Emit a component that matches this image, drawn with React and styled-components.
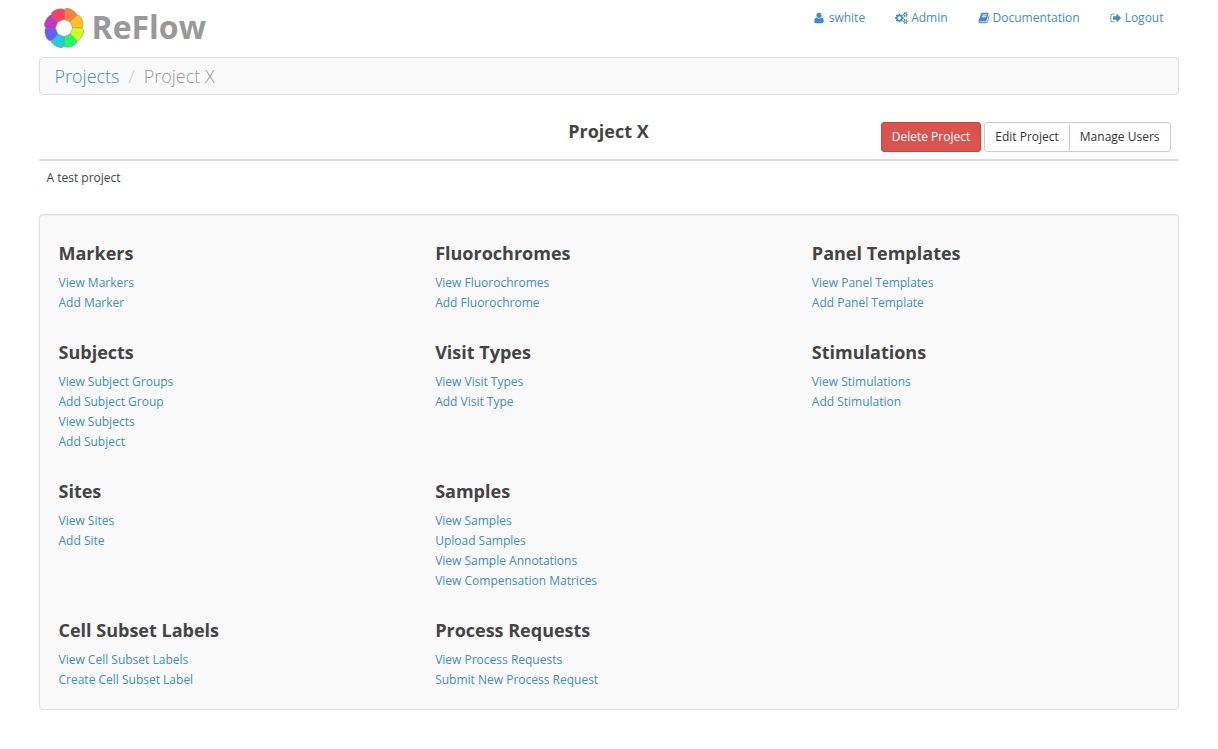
import React from "react";
import styled, { createGlobalStyle } from "styled-components";

const GlobalStyle = createGlobalStyle`
  *, *::before, *::after { box-sizing: border-box; }
  body {
    margin: 0 1px 0 0;
    background: #fff;
    color: #444;
    font: 12px/20px "Open Sans", "Noto Sans", sans-serif;
  }
`;

const Link = styled.a`
  color: #428bca;
  text-decoration: none;
  &:hover { text-decoration: underline; }
`;

const Container = styled.div`
  max-width: 1170px;
  margin: 0 auto;
  padding: 0 15px 39px;
`;

const Header = styled.header`
  display: flex;
  flex-wrap: wrap;
  justify-content: space-between;
  align-items: flex-start;
  min-height: 57px;
`;

const Brand = styled.a`
  display: flex;
  align-items: flex-start;
  gap: 7px;
  padding: 7px 4px;
  color: #999;
  font-size: 32px;
  font-weight: 700;
  line-height: 40px;
  text-decoration: none;
`;

const Nav = styled.nav`
  display: flex;
  flex-wrap: wrap;
  gap: 30px;
  padding: 8px 15px;
`;

const NavLink = styled(Link)`
  display: flex;
  align-items: center;
  gap: ${(p) => (p.$wide ? 5 : 3)}px;
`;

const Glyph = styled.svg`
  height: 12px;
  fill: currentColor;
`;

const Breadcrumb = styled.ol`
  display: flex;
  list-style: none;
  margin: 0 0 20px;
  padding: 8px 15px;
  border: 1px solid #ddd;
  border-radius: 4px;
  background: #f9f9f9;
  font-size: 18px;
  font-weight: 300;
`;

const Crumb = styled.li`
  color: #999;
  & + &::before {
    content: "/";
    padding: 0 9px;
    color: #ccc;
  }
`;

const TitleBar = styled.div`
  display: grid;
  grid-template-columns: 1fr auto 1fr;
  align-items: start;
  padding: 7px 8px;
  border-bottom: 2px solid #ddd;
`;

const Title = styled.h1`
  grid-column: 2;
  margin: 0;
  font-size: 18px;
  line-height: 18px;
`;

const Actions = styled.div`
  display: flex;
  justify-content: flex-end;
  gap: 3px;
`;

const ButtonGroup = styled.div`
  display: flex;
`;

const Button = styled.button`
  padding: 4px 10px;
  border: 1px solid ${(p) => (p.$danger ? "#d43f3a" : "#ccc")};
  border-radius: 3px;
  background: ${(p) => (p.$danger ? "#d9534f" : "#fff")};
  color: ${(p) => (p.$danger ? "#fff" : "#333")};
  font: inherit;
  white-space: nowrap;
  cursor: pointer;

  ${ButtonGroup} &:not(:last-child) {
    border-top-right-radius: 0;
    border-bottom-right-radius: 0;
  }
  ${ButtonGroup} & + & {
    margin-left: -1px;
    border-top-left-radius: 0;
    border-bottom-left-radius: 0;
  }
`;

const Description = styled.p`
  margin: 7px 0 26px;
  padding: 0 8px;
`;

const Panel = styled.main`
  display: grid;
  grid-template-columns: repeat(3, 1fr);
  row-gap: 29px;
  padding: 28px 4px 19px;
  border: 1px solid #ddd;
  border-radius: 4px;
  background: #f9f9f9;
  box-shadow: inset 0 1px 1px rgba(0, 0, 0, 0.05);
`;

const Section = styled.section`
  grid-column: ${(p) => p.$column};
  padding: 0 15px;
`;

const SectionTitle = styled.h2`
  margin: 0 0 10px;
  font-size: 18px;
  line-height: 20px;
`;

const LinkList = styled.ul`
  list-style: none;
  margin: 0;
  padding: 0;
`;

const petals = ["#ff8040", "#ffc020", "#ccff20", "#20ff60", "#20ccdd", "#6060ff", "#c038c0", "#ff4060"];

function Logo() {
  return (
    <svg width="42" height="42" viewBox="-21 -21 42 42" aria-hidden="true">
      {petals.map((color, i) => (
        <path
          key={color}
          d="M-4-8.6Q-3.2-7.6-1.8-7.9Q0-8.4 1.8-7.9Q3.2-7.6 3.9-8.8L6.8-15Q7.6-17.2 5.8-18.2Q3-19.8-.6-19.9Q-4.4-20-5.8-18.6Q-7.1-17.3-6.5-15.2Z"
          transform={`rotate(${22.5 + i * 45})`}
          fill={color}
          stroke="#808080"
          strokeOpacity="0.75"
          strokeWidth="0.6"
        />
      ))}
    </svg>
  );
}

const glyphs = {
  user: {
    box: "0 0 1408 1792",
    width: 10,
    flip: true,
    d: "M1408 131q0 -120 -73 -189.5t-194 -69.5h-874q-121 0 -194 69.5t-73 189.5q0 53 3.5 103.5t14 109t26.5 108.5t43 97.5t62 81t85.5 53.5t111.5 20q9 0 42 -21.5t74.5 -48t108 -48t133.5 -21.5t133.5 21.5t108 48t74.5 48t42 21.5q61 0 111.5 -20t85.5 -53.5t62 -81t43 -97.5t26.5 -108.5t14 -109t3.5 -103.5zM1088 1024q0 -159 -112.5 -271.5t-271.5 -112.5t-271.5 112.5t-112.5 271.5t112.5 271.5t271.5 112.5t271.5 -112.5t112.5 -271.5z",
  },
  cogs: {
    box: "-64 0 1920 1792",
    width: 13,
    d: "M832 896q0-106-75-181t-181-75-181 75-75 181 75 181 181 75 181-75 75-181zm768 512q0-52-38-90t-90-38-90 38-38 90q0 53 37.5 90.5t90.5 37.5 90.5-37.5 37.5-90.5zm0-1024q0-52-38-90t-90-38-90 38-38 90q0 53 37.5 90.5t90.5 37.5 90.5-37.5 37.5-90.5zm-384 421v185q0 10-7 19.5t-16 10.5l-155 24q-11 35-32 76 34 48 90 115 7 11 7 20 0 12-7 19-23 30-82.5 89.5t-78.5 59.5q-11 0-21-7l-115-90q-37 19-77 31-11 108-23 155-7 24-30 24h-186q-11 0-20-7.5t-10-17.5l-23-153q-34-10-75-31l-118 89q-7 7-20 7-11 0-21-8-144-133-144-160 0-9 7-19 10-14 41-53t47-61q-23-44-35-82l-152-24q-10-1-17-9.5t-7-19.5v-185q0-10 7-19.5t16-10.5l155-24q11-35 32-76-34-48-90-115-7-11-7-20 0-12 7-20 22-30 82-89t79-59q11 0 21 7l115 90q34-18 77-32 11-108 23-154 7-24 30-24h186q11 0 20 7.5t10 17.5l23 153q34 10 75 31l118-89q8-7 20-7 11 0 21 8 144 133 144 160 0 8-7 19-12 16-42 54t-45 60q23 48 34 82l152 23q10 2 17 10.5t7 19.5zm640 533v140q0 16-149 31-12 27-30 52 51 113 51 138 0 4-4 7-122 71-124 71-8 0-46-47t-52-68q-20 2-30 2t-30-2q-14 21-52 68t-46 47q-2 0-124-71-4-3-4-7 0-25 51-138-18-25-30-52-149-15-149-31v-140q0-16 149-31 13-29 30-52-51-113-51-138 0-4 4-7 4-2 35-20t59-34 30-16q8 0 46 46.5t52 67.5q20-2 30-2t30 2q51-71 92-112l6-2q4 0 124 70 4 3 4 7 0 25-51 138 17 23 30 52 149 15 149 31zm0-1024v140q0 16-149 31-12 27-30 52 51 113 51 138 0 4-4 7-122 71-124 71-8 0-46-47t-52-68q-20 2-30 2t-30-2q-14 21-52 68t-46 47q-2 0-124-71-4-3-4-7 0-25 51-138-18-25-30-52-149-15-149-31v-140q0-16 149-31 13-29 30-52-51-113-51-138 0-4 4-7 4-2 35-20t59-34 30-16q8 0 46 46.5t52 67.5q20-2 30-2t30 2q51-71 92-112l6-2q4 0 124 70 4 3 4 7 0 25-51 138 17 23 30 52 149 15 149 31z",
  },
  book: {
    box: "64 0 1664 1792",
    width: 12,
    d: "M1703 478q40 57 18 129l-275 906q-19 64-76.5 107.5t-122.5 43.5h-923q-77 0-148.5-53.5t-99.5-131.5q-24-67-2-127 0-4 3-27t4-37q1-8-3-21.5t-3-19.5q2-11 8-21t16.5-23.5 16.5-23.5q23-38 45-91.5t30-91.5q3-10 .5-30t-.5-28q3-11 17-28t17-23q21-36 42-92t25-90q1-9-2.5-32t.5-28q4-13 22-30.5t22-22.5q19-26 42.5-84.5t27.5-96.5q1-8-3-25.5t-2-26.5q2-8 9-18t18-23 17-21q8-12 16.5-30.5t15-35 16-36 19.5-32 26.5-23.5 36-11.5 47.5 5.5l-1 3q38-9 51-9h761q74 0 114 56t18 130l-274 906q-36 119-71.5 153.5t-128.5 34.5h-869q-27 0-38 15-11 16-1 43 24 70 144 70h923q29 0 56-15.5t35-41.5l300-987q7-22 5-57 38 15 59 43zm-1064 2q-4 13 2 22.5t20 9.5h608q13 0 25.5-9.5t16.5-22.5l21-64q4-13-2-22.5t-20-9.5h-608q-13 0-25.5 9.5t-16.5 22.5zm-83 256q-4 13 2 22.5t20 9.5h608q13 0 25.5-9.5t16.5-22.5l21-64q4-13-2-22.5t-20-9.5h-608q-13 0-25.5 9.5t-16.5 22.5z",
  },
  signOut: {
    box: "0 0 1792 1792",
    width: 12,
    d: "M704 1440q0 4 1 20t.5 26.5-3 23.5-10 19.5-20.5 6.5h-320q-119 0-203.5-84.5t-84.5-203.5v-704q0-119 84.5-203.5t203.5-84.5h320q13 0 22.5 9.5t9.5 22.5q0 4 1 20t.5 26.5-3 23.5-10 19.5-20.5 6.5h-320q-66 0-113 47t-47 113v704q0 66 47 113t113 47h312l11.5 1 11.5 3 8 5.5 7 9 2 13.5zm928-544q0 26-19 45l-544 544q-19 19-45 19t-45-19-19-45v-288h-448q-26 0-45-19t-19-45v-384q0-26 19-45t45-19h448v-288q0-26 19-45t45-19 45 19l544 544q19 19 19 45z",
  },
};

function Icon({ name }) {
  const { box, width, flip, d } = glyphs[name];
  return (
    <Glyph viewBox={box} width={width} aria-hidden="true">
      <path d={d} transform={flip ? "matrix(1 0 0 -1 0 1536)" : undefined} />
    </Glyph>
  );
}

const navItems = [
  { icon: "user", label: "swhite", wide: true },
  { icon: "cogs", label: "Admin" },
  { icon: "book", label: "Documentation" },
  { icon: "signOut", label: "Logout" },
];

const sections = [
  { column: 1, title: "Markers", links: ["View Markers", "Add Marker"] },
  { column: 2, title: "Fluorochromes", links: ["View Fluorochromes", "Add Fluorochrome"] },
  { column: 3, title: "Panel Templates", links: ["View Panel Templates", "Add Panel Template"] },
  { column: 1, title: "Subjects", links: ["View Subject Groups", "Add Subject Group", "View Subjects", "Add Subject"] },
  { column: 2, title: "Visit Types", links: ["View Visit Types", "Add Visit Type"] },
  { column: 3, title: "Stimulations", links: ["View Stimulations", "Add Stimulation"] },
  { column: 1, title: "Sites", links: ["View Sites", "Add Site"] },
  { column: 2, title: "Samples", links: ["View Samples", "Upload Samples", "View Sample Annotations", "View Compensation Matrices"] },
  { column: 1, title: "Cell Subset Labels", links: ["View Cell Subset Labels", "Create Cell Subset Label"] },
  { column: 2, title: "Process Requests", links: ["View Process Requests", "Submit New Process Request"] },
];

export default function App() {
  return (
    <>
      <GlobalStyle />
      <Container>
        <Header>
          <Brand href="#">
            <Logo />
            ReFlow
          </Brand>
          <Nav>
            {navItems.map((item) => (
              <NavLink key={item.label} href="#" $wide={item.wide}>
                <Icon name={item.icon} />
                {item.label}
              </NavLink>
            ))}
          </Nav>
        </Header>
        <Breadcrumb>
          <Crumb><Link href="#">Projects</Link></Crumb>
          <Crumb>Project X</Crumb>
        </Breadcrumb>
        <TitleBar>
          <Title>Project X</Title>
          <Actions>
            <Button type="button" $danger>Delete Project</Button>
            <ButtonGroup>
              <Button type="button">Edit Project</Button>
              <Button type="button">Manage Users</Button>
            </ButtonGroup>
          </Actions>
        </TitleBar>
        <Description>A test project</Description>
        <Panel>
          {sections.map((section) => (
            <Section key={section.title} $column={section.column}>
              <SectionTitle>{section.title}</SectionTitle>
              <LinkList>
                {section.links.map((label) => (
                  <li key={label}><Link href="#">{label}</Link></li>
                ))}
              </LinkList>
            </Section>
          ))}
        </Panel>
      </Container>
    </>
  );
}
